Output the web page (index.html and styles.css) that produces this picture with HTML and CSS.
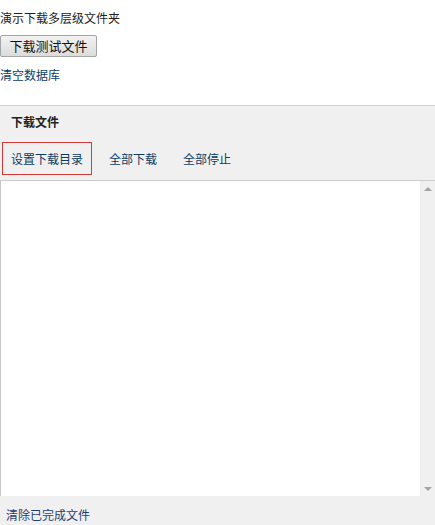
FILE: index.html
```html
<!DOCTYPE html>
<html lang="zh-CN">
<head>
    <meta charset="UTF-8">
    <title>下载文件</title>
    <link rel="stylesheet" href="styles.css">
</head>
<body>
    <p class="intro">演示下载多层级文件夹</p>
    <button class="test-btn">下载测试文件</button>
    <p><a class="clear-db" href="#">清空数据库</a></p>

    <!-- Download panel -->
    <div class="panel">
        <div class="panel-title">下载文件</div>
        <div class="toolbar">
            <a href="#" class="tool active">设置下载目录</a>
            <a href="#" class="tool">全部下载</a>
            <a href="#" class="tool">全部停止</a>
        </div>
        <div class="list">
            <div class="list-body"></div>
            <div class="scrollbar">
                <span class="arrow up"></span>
                <span class="arrow down"></span>
            </div>
        </div>
        <div class="panel-footer">
            <a href="#">清除已完成文件</a>
        </div>
    </div>
</body>
</html>
```

FILE: styles.css
```css
/* Global Styles */
body {
    margin: 0;
    font-family: "Noto Sans CJK SC", sans-serif;
    font-size: 12px;
    color: #222;
    background-color: #fff;
}

a {
    text-decoration: none;
}

.intro {
    margin: 9px 0 0;
    line-height: 17px;
}

.test-btn {
    margin-top: 9px;
    height: 22px;
    width: 97px;
    padding: 0;
    font-family: "Noto Sans CJK SC", sans-serif;
    font-size: 13px;
    line-height: 18px;
    color: #111;
    background: linear-gradient(#f2f2f2, #dcdcdc);
    border: 1px solid #a5a5a5;
    border-radius: 2px;
}

p {
    margin: 9px 0 0;
    line-height: 17px;
}

.clear-db {
    color: #0d3d66;
}

/* Download panel */
.panel {
    margin-top: 22px;
    background-color: #f0f0f0;
    border-top: 1px solid #cfcfcf;
}

.panel-title {
    padding: 7px 11px 0;
    line-height: 17px;
    font-weight: bold;
    color: #222;
}

.toolbar {
    display: flex;
    align-items: center;
    padding: 12px 0 5px 2px;
}

.tool {
    color: #0d3d66;
    line-height: 17px;
    padding: 7px 8px;
    margin-right: 8px;
    border: 1px solid transparent;
}

.tool.active {
    border-color: #d33b3b;
}

.list {
    display: flex;
    height: 315px;
    border-top: 1px solid #cccccc;
    border-left: 1px solid #c8c8c8;
}

.list-body {
    flex: 1;
    background-color: #fff;
}

.scrollbar {
    width: 15px;
    background-color: #f0f0f0;
    display: flex;
    flex-direction: column;
    justify-content: space-between;
    align-items: center;
    padding: 6px 0 5px;
}

.arrow {
    width: 0;
    height: 0;
    border-left: 4px solid transparent;
    border-right: 4px solid transparent;
}

.arrow.up {
    border-bottom: 4px solid #a3a3a3;
}

.arrow.down {
    border-top: 4px solid #a3a3a3;
}

.panel-footer {
    padding: 10px 6px 3px;
    line-height: 17px;
}

.panel-footer a {
    color: #1f3e72;
}
```
